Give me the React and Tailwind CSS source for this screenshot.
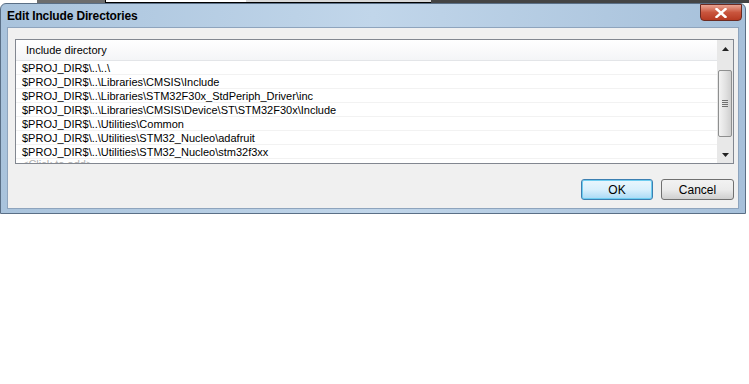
import React from 'react';

const rows = [
  '$PROJ_DIR$\\..\\..\\',
  '$PROJ_DIR$\\..\\Libraries\\CMSIS\\Include',
  '$PROJ_DIR$\\..\\Libraries\\STM32F30x_StdPeriph_Driver\\inc',
  '$PROJ_DIR$\\..\\Libraries\\CMSIS\\Device\\ST\\STM32F30x\\Include',
  '$PROJ_DIR$\\..\\Utilities\\Common',
  '$PROJ_DIR$\\..\\Utilities\\STM32_Nucleo\\adafruit',
  '$PROJ_DIR$\\..\\Utilities\\STM32_Nucleo\\stm32f3xx',
];

const font = { fontFamily: '"Liberation Sans", Arial, sans-serif' };

const App = () => {
  return (
    <div className="w-[749px] h-[384px] bg-white overflow-hidden" style={font}>
      {/* bits of the window behind */}
      <div className="h-[3px] flex">
        <div className="w-[37px] bg-white" />
        <div className="w-[68px] bg-[#6d6d6d]" />
        <div className="w-[1px] bg-black" />
        <div className="w-[140px] bg-white border-b border-black" />
        <div className="w-[185px] bg-[#d8d8d8] border-b border-black" />
        <div className="flex-1 bg-[#444]" />
      </div>

      <div className="w-[746px] h-[211px] rounded-t-[6px] border border-[#5a6f86] bg-gradient-to-r from-[#a9c3dc] via-[#c1d6ea] to-[#a6c0da] flex flex-col">
        {/* title bar */}
        <div className="h-[23px] flex items-center justify-between pl-[6px] pr-[3px]">
          <span className="text-[12px] font-bold text-black tracking-[-0.15px]">Edit Include Directories</span>
          <div className="w-[42px] h-[17px] -mt-[6px] rounded-b-[4px] border border-[#6b2b22] bg-gradient-to-b from-[#e8a493] via-[#c9553d] to-[#b63a22] flex items-center justify-center">
            <svg width="12" height="10" viewBox="0 0 12 10">
              <path d="M1.5 1 L10.5 9 M10.5 1 L1.5 9" stroke="#fff" strokeWidth="2.4" strokeLinecap="square" />
            </svg>
          </div>
        </div>

        {/* client area */}
        <div className="mx-[6px] mb-[4px] flex-1 bg-[#f0f0f0] border border-[#8ea4bd] flex flex-col pl-[7px] pr-[4px] pt-[11px]">
          <div className="h-[125px] border border-[#828790] bg-white flex">
            <div className="flex-1 flex flex-col overflow-hidden">
              <div className="h-[21px] shrink-0 bg-gradient-to-b from-white to-[#f4f5f7] border-b border-[#e3e5e8] flex items-center pl-[10px] text-[11px]">
                <span className="text-black">Include directory</span>
              </div>
              {rows.map((r) => (
                <div key={r} className="h-[14px] shrink-0 border-b border-[#f2f2f2] flex items-center pl-[6px] text-[11px] leading-[14px] text-black whitespace-nowrap">
                  {r}
                </div>
              ))}
              <div className="h-[14px] shrink-0 flex items-center pl-[6px] text-[11px] text-[#b0b0b0] whitespace-nowrap -mt-[2px]">
                &lt;Click to add&gt;
              </div>
            </div>
            {/* scrollbar */}
            <div className="w-[16px] bg-[#e8e8e8] flex flex-col items-center">
              <div className="h-[18px] w-full flex items-center justify-center">
                <svg width="7" height="4" viewBox="0 0 7 4"><path d="M3.5 0 L7 4 L0 4 Z" fill="#222" /></svg>
              </div>
              <div className="h-[12px]" />
              <div className="w-[14px] h-[67px] rounded-[2px] border border-[#8e8f8f] bg-gradient-to-r from-[#f3f3f3] via-[#e3e3e3] to-[#cfcfcf] flex items-center justify-center">
                <svg width="6" height="7" viewBox="0 0 6 7">
                  <path d="M0 0.5 H6 M0 2.5 H6 M0 4.5 H6 M0 6.5 H6" stroke="#6f6f6f" strokeWidth="1" />
                </svg>
              </div>
              <div className="flex-1" />
              <div className="h-[16px] w-full flex items-center justify-center">
                <svg width="7" height="4" viewBox="0 0 7 4"><path d="M0 0 L7 0 L3.5 4 Z" fill="#222" /></svg>
              </div>
            </div>
          </div>

          <div className="flex justify-end gap-[8px] mt-[15px]">
            <button className="w-[72px] h-[21px] rounded-[3px] border border-[#3c7fb1] bg-gradient-to-b from-[#eaf6fd] via-[#d9f0fc] to-[#a7d9f5] text-[12px] text-black shadow-[inset_0_0_0_1px_#6ecdf0]">
              OK
            </button>
            <button className="w-[73px] h-[21px] rounded-[3px] border border-[#707070] bg-gradient-to-b from-[#f2f2f2] via-[#ebebeb] to-[#cfcfcf] text-[12px] text-black">
              Cancel
            </button>
          </div>
        </div>
      </div>
    </div>
  );
};

export default App;
